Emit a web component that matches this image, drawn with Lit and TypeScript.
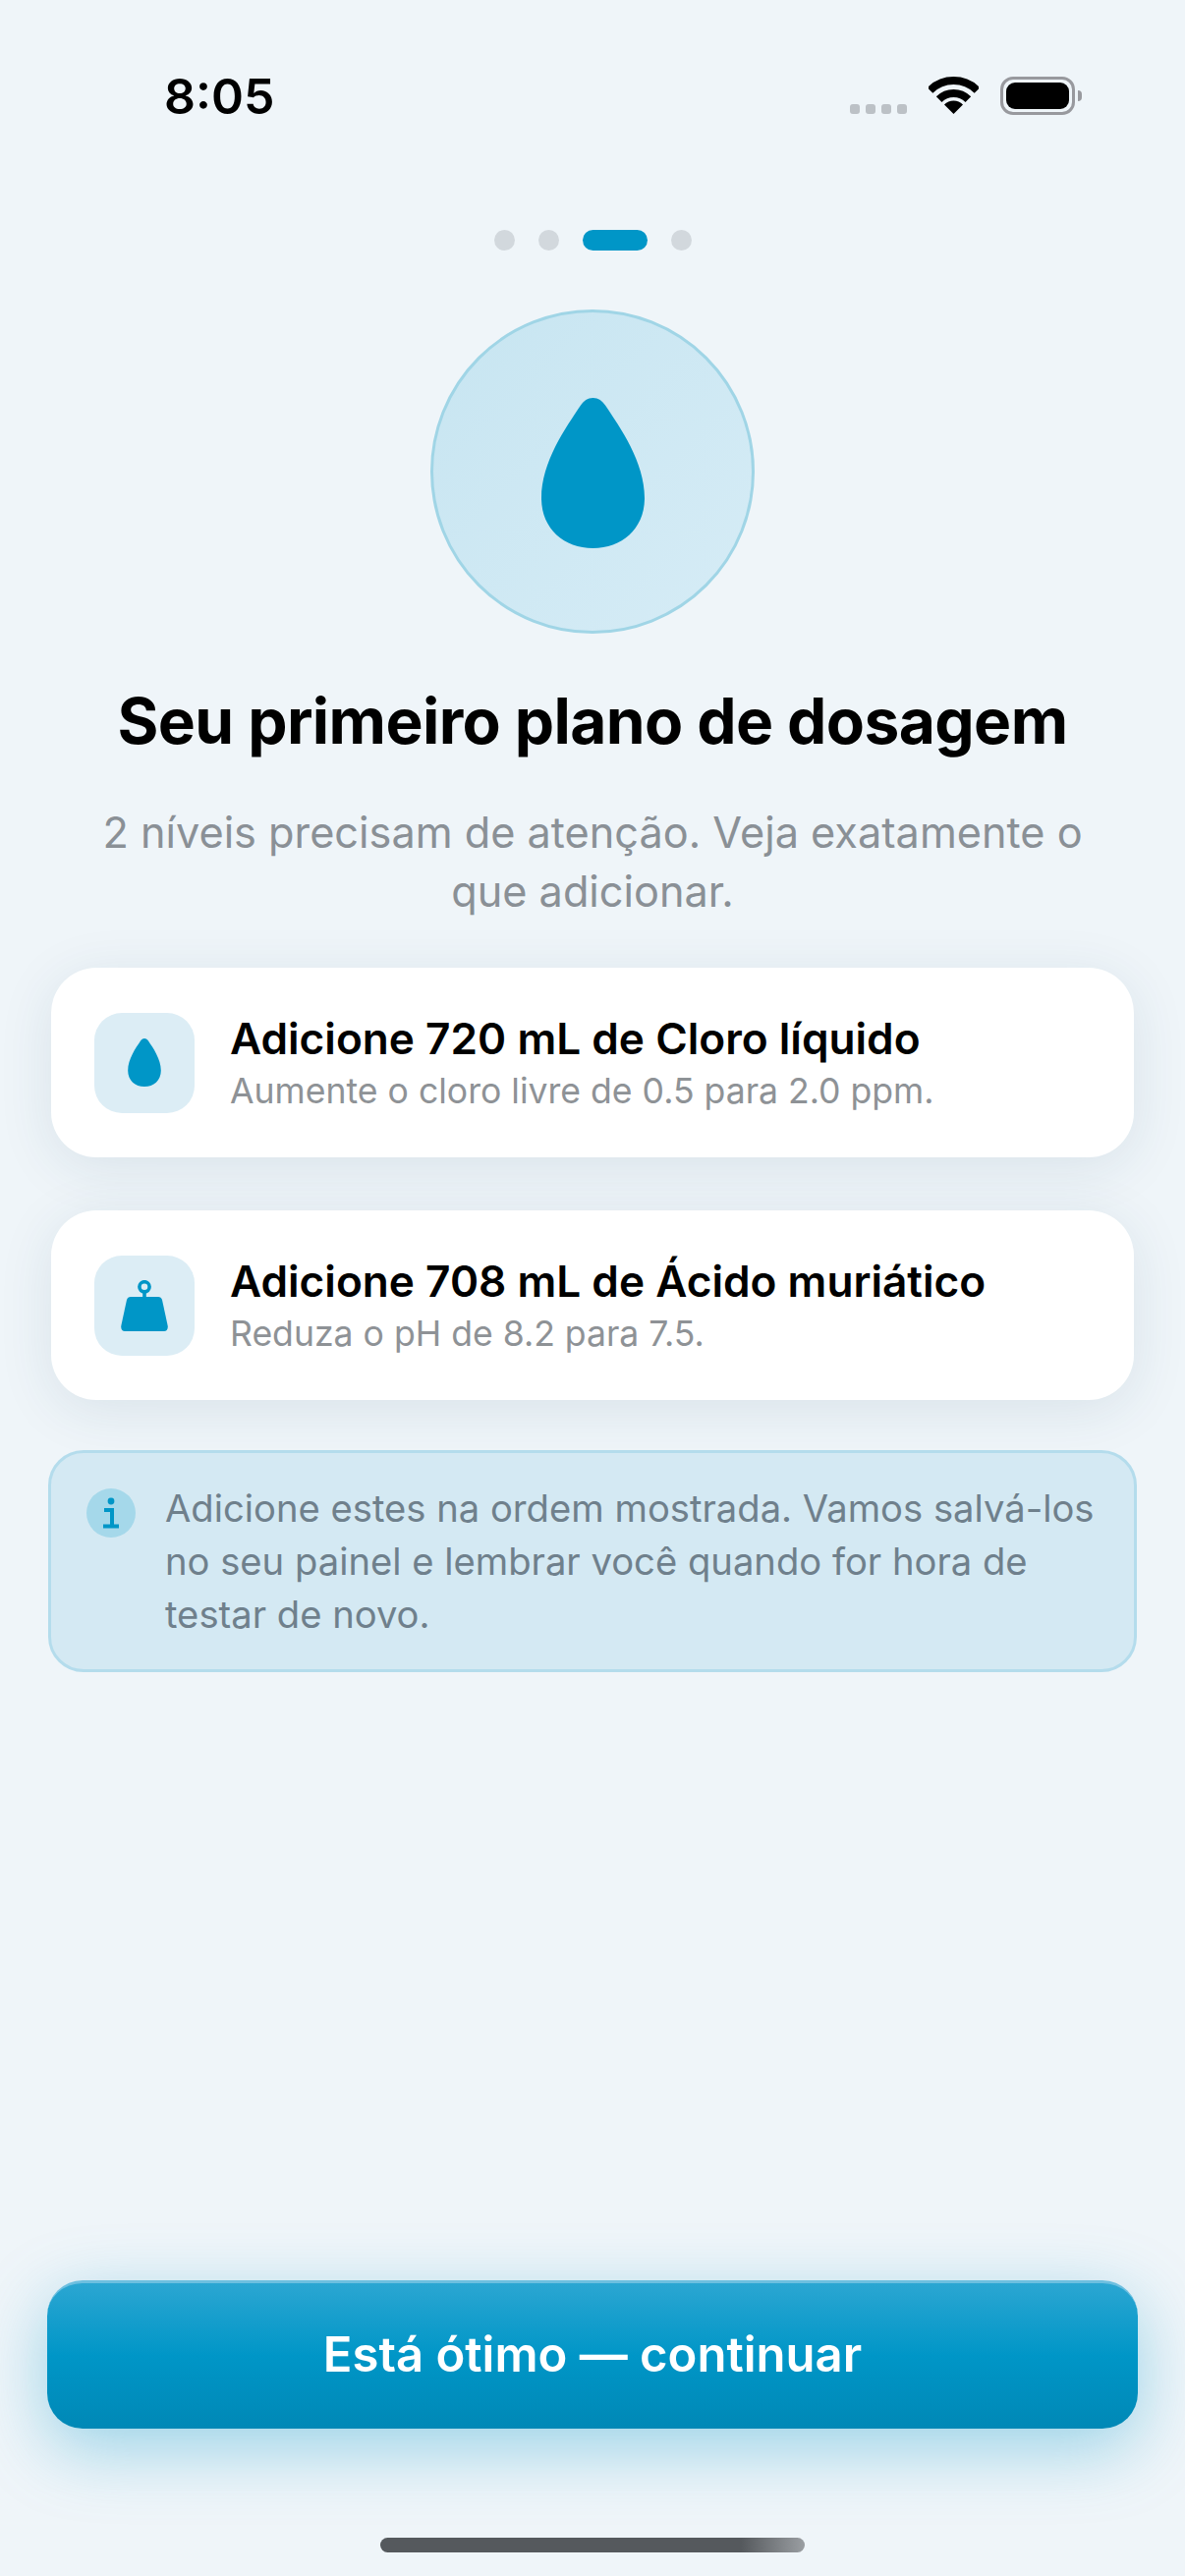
import { LitElement, html, css, svg } from "lit";
import { customElement } from "lit/decorators.js";

const dropPath = svg`<path d="M52.5 0C58 0 62 3 65 7.5C80 30 105 65 105 102C105 133 82 153 52.5 153C23 153 0 133 0 102C0 65 25 30 40 7.5C43 3 47 0 52.5 0Z" fill="#0096c7" />`;

const weightIcon = html`<svg width="48" height="52" viewBox="0 0 48 52">
  <circle cx="24" cy="6.8" r="5.1" fill="none" stroke="#0096c7" stroke-width="3.6" />
  <path d="M22.2 11H25.8V18H22.2Z" fill="#0096c7" />
  <path
    d="M10 17H38C40 17 41.4 18 42 20L47.6 46C48.4 50 46.5 52 44 52H4C1.5 52 -.4 50 .4 46L6 20C6.6 18 8 17 10 17Z"
    fill="#0096c7"
  />
</svg>`;

const steps = [
  {
    title: "Adicione 720 mL de Cloro líquido",
    sub: "Aumente o cloro livre de 0.5 para 2.0 ppm.",
    icon: html`<svg width="34" height="49" viewBox="0 0 105 153">${dropPath}</svg>`,
  },
  {
    title: "Adicione 708 mL de Ácido muriático",
    sub: "Reduza o pH de 8.2 para 7.5.",
    icon: weightIcon,
  },
];

@customElement("app-root")
class AppRoot extends LitElement {
  static styles = css`
    :host {
      display: block;
      font-family: Inter, "Noto Sans", sans-serif;
    }

    .page {
      height: 2622px;
      box-sizing: border-box;
      display: flex;
      flex-direction: column;
      background: #eff5f9;
      overflow: hidden;
    }

    .status {
      display: flex;
      justify-content: space-between;
      align-items: flex-start;
      height: 234px;
      box-sizing: border-box;
      padding: 70px 112px 0 167px;
    }

    .time {
      font-size: 50px;
      line-height: 56px;
      font-weight: 600;
      color: #000;
    }

    .sys {
      display: flex;
      align-items: flex-start;
      padding-top: 8px;
    }

    .signal {
      display: flex;
      gap: 6px;
      margin-top: 28px;
      margin-right: 22px;
    }

    .signal i {
      width: 10px;
      height: 10px;
      border-radius: 3px;
      background: #bcc1c6;
    }

    .battery {
      width: 76px;
      height: 39px;
      box-sizing: border-box;
      margin-left: 22px;
      padding: 3px;
      border: 3px solid #98999e;
      border-radius: 13px;
      position: relative;
    }

    .battery b {
      display: block;
      height: 100%;
      background: #000;
      border-radius: 9px;
    }

    .battery::after {
      content: "";
      position: absolute;
      right: -10px;
      top: 11px;
      width: 4px;
      height: 11px;
      border-radius: 0 4px 4px 0;
      background: #98999e;
    }

    .dots {
      display: flex;
      justify-content: center;
      gap: 24px;
    }

    .dots i {
      width: 21px;
      height: 21px;
      border-radius: 50%;
      background: #d2d8dd;
    }

    .dots i.on {
      width: 66px;
      border-radius: 11px;
      background: #0096c7;
    }

    .hero {
      width: 330px;
      height: 330px;
      box-sizing: border-box;
      margin: 60px auto 0;
      border: 3px solid #a0d5e6;
      border-radius: 50%;
      background: linear-gradient(135deg, #c7e5f1, #d6ecf6);
      display: flex;
      align-items: center;
      justify-content: center;
    }

    .hero svg {
      margin-top: 2px;
    }

    h1 {
      margin: 50px 0 0;
      text-align: center;
      font-size: 64px;
      line-height: 78px;
      font-weight: 700;
      color: #000;
      letter-spacing: -0.6px;
    }

    .lead {
      margin: 44px 80px 0;
      text-align: center;
      font-size: 43.25px;
      line-height: 60px;
      color: #8a9096;
    }

    .cards {
      display: flex;
      flex-direction: column;
      gap: 54px;
      margin: 48px 52px 0;
    }

    .card {
      height: 193px;
      box-sizing: border-box;
      display: flex;
      align-items: center;
      gap: 36px;
      padding: 0 44px;
      background: #fff;
      border-radius: 46px;
      box-shadow: 0 10px 56px rgba(30, 70, 100, 0.1);
    }

    .badge {
      width: 102px;
      height: 102px;
      flex: none;
      border-radius: 28px;
      background: #dcedf5;
      display: flex;
      align-items: center;
      justify-content: center;
    }

    .card h2 {
      margin: 0;
      font-size: 44.2px;
      line-height: 54px;
      font-weight: 600;
      color: #000;
    }

    .card p {
      margin: 5px 0 0;
      font-size: 35.6px;
      line-height: 44px;
      color: #8e9296;
    }

    .note {
      display: flex;
      gap: 30px;
      margin: 51px 49px 0;
      height: 226px;
      box-sizing: border-box;
      padding: 29px 30px 0 36px;
      background: #d4e9f3;
      border: 3px solid #b4dcec;
      border-radius: 36px;
    }

    .note svg {
      flex: none;
      margin-top: 7px;
    }

    .note p {
      margin: 0;
      font-size: 38.2px;
      line-height: 54px;
      color: #6f808c;
    }

    .grow {
      flex: 1;
    }

    .cta {
      height: 151px;
      box-sizing: border-box;
      margin: 0 48px;
      padding-bottom: 3px;
      display: flex;
      align-items: center;
      justify-content: center;
      font-size: 49px;
      font-weight: 600;
      color: #fff;
      border-radius: 36px;
      border-top: 3px solid #6dbfe0;
      background: linear-gradient(180deg, #2ba6d2, #0096c7 50%, #0088b6);
      box-shadow: 0 20px 70px rgba(0, 150, 199, 0.36);
    }

    .home {
      width: 432px;
      height: 15px;
      margin: 111px auto 24px;
      border-radius: 8px;
      background: linear-gradient(90deg, #55595d 85%, #9a9ea2);
    }
  `;

  render() {
    return html`
      <div class="page">
        <div class="status">
          <span class="time">8:05</span>
          <div class="sys">
            <div class="signal"><i></i><i></i><i></i><i></i></div>
            <svg width="51" height="38" viewBox="0 0 51 38" fill="none" stroke="#000" stroke-width="8">
              <path d="M1.5 14A34 34 0 0 1 49.5 14" />
              <path d="M10.65 23.15A21 21 0 0 1 40.35 23.15" />
              <path d="M25.5 38L16 28.5A13.4 13.4 0 0 1 35 28.5Z" fill="#000" stroke="none" />
            </svg>
            <div class="battery"><b></b></div>
          </div>
        </div>
        <div class="dots"><i></i><i></i><i class="on"></i><i></i></div>
        <div class="hero">
          <svg width="105" height="153" viewBox="0 0 105 153">${dropPath}</svg>
        </div>
        <h1>Seu primeiro plano de dosagem</h1>
        <p class="lead">2 níveis precisam de atenção. Veja exatamente o que adicionar.</p>
        <div class="cards">
          ${steps.map(
            (s) => html`<div class="card">
              <div class="badge">${s.icon}</div>
              <div>
                <h2>${s.title}</h2>
                <p>${s.sub}</p>
              </div>
            </div>`
          )}
        </div>
        <div class="note">
          <svg width="50" height="50" viewBox="0 0 50 50">
            <circle cx="25" cy="25" r="25" fill="#a5d8ea" />
            <circle cx="25" cy="13" r="3.4" fill="#0096c7" />
            <path d="M18 22H26V38M17 38.5H33" fill="none" stroke="#0096c7" stroke-width="4" />
          </svg>
          <p>Adicione estes na ordem mostrada. Vamos salvá-los no seu painel e lembrar você quando for hora de testar de novo.</p>
        </div>
        <div class="grow"></div>
        <div class="cta">Está ótimo — continuar</div>
        <div class="home"></div>
      </div>
    `;
  }
}
